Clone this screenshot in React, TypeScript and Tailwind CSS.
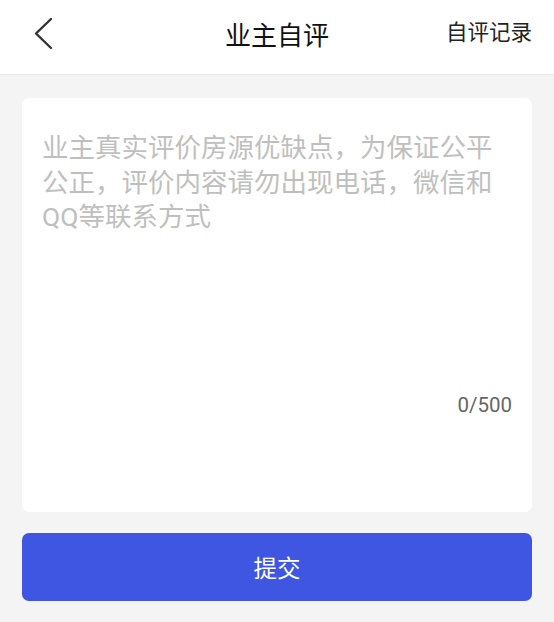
import { useState } from 'react';

const FONT = "font-['Roboto','Noto_Sans_CJK_SC',sans-serif]";
const MAX_LEN = 500;

export default function App() {
  const [content, setContent] = useState('');

  return (
    <div className={`w-[554px] h-[622px] bg-[#f4f4f4] flex flex-col ${FONT}`}>
      {/* 顶部导航 */}
      <header className="h-[75px] bg-white border-b border-[#e8e8e8] grid grid-cols-[1fr_auto_1fr] items-center px-[22px]">
        <button className="w-[40px] h-[40px] flex items-center" aria-label="返回">
          <svg width="20" height="34" viewBox="0 0 20 34" fill="none" className="ml-[12px] -mt-[6px]">
            <path d="M17 2 L2 16.5 L17 31" stroke="#333" strokeWidth="2.4" strokeLinecap="round" strokeLinejoin="round" />
          </svg>
        </button>
        <h1 className="text-[26px] leading-none text-[#111] -mt-[2px]">业主自评</h1>
        <button className="justify-self-end text-[21.5px] leading-none text-[#222] -mt-[9px]">自评记录</button>
      </header>

      <main className="flex-1 px-[22px] pt-[23px] flex flex-col">
        <div className="h-[414px] bg-white rounded-[7px] pt-[33px] px-5 flex flex-col">
          <textarea
            value={content}
            maxLength={MAX_LEN}
            onChange={(e) => setContent(e.target.value)}
            placeholder="业主真实评价房源优缺点，为保证公平公正，评价内容请勿出现电话，微信和QQ等联系方式"
            className="h-[262px] w-full resize-none outline-none p-0 text-[26.5px] leading-[34.5px] text-[#333] placeholder:text-[#bfbfbf]"
          />
          <p className="text-right text-[20.5px] leading-[24px] text-[#666]">
            {content.length}/{MAX_LEN}
          </p>
        </div>

        <button className="mt-[21px] h-[68px] w-full rounded-[7px] bg-[#3f56e2] text-white text-[23.5px] leading-none pt-[5px]">
          提交
        </button>
      </main>
    </div>
  );
}
